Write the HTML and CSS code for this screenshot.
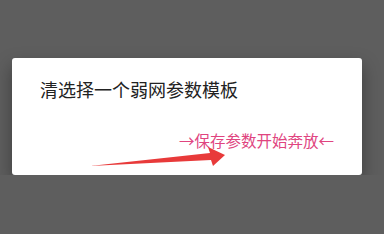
FILE: index.html
```html
<!DOCTYPE html>
<html lang="zh">
<head>
    <meta charset="UTF-8">
    <title>弱网参数模板</title>
    <link rel="stylesheet" href="styles.css">
</head>
<body>
    <!-- Dialog -->
    <div class="dialog">
        <div class="dialog-title">清选择一个弱网参数模板</div>
        <div class="dialog-action">→保存参数开始奔放←</div>
        <!-- annotation arrow -->
        <svg class="mark-arrow" width="150" height="30" viewBox="0 0 150 30">
            <polygon points="12,20 132,7 130,1 147,9 135,20 133,14" fill="#e83a3a"/>
        </svg>
    </div>
</body>
</html>
```

FILE: styles.css
```css
body {
    margin: 0;
    padding: 0;
    background-color: #5e5e5e;
    font-family: "Noto Sans CJK SC", "Noto Sans", sans-serif;
}

.dialog {
    position: relative;
    width: 350px;
    height: 117px;
    margin: 58px 0 0 12px;
    background-color: #fff;
    border-radius: 3px;
    box-shadow: 0 8px 18px rgba(0, 0, 0, 0.35);
    box-sizing: border-box;
    padding: 19px 28px 0 28px;
}

.dialog-title {
    font-size: 18px;
    line-height: 24px;
    color: #222;
}

.dialog-action {
    margin-top: 29px;
    text-align: right;
    font-size: 15.5px;
    line-height: 20px;
    color: #e0457f;
}

.mark-arrow {
    position: absolute;
    left: 66px;
    top: 88px;
}
```
